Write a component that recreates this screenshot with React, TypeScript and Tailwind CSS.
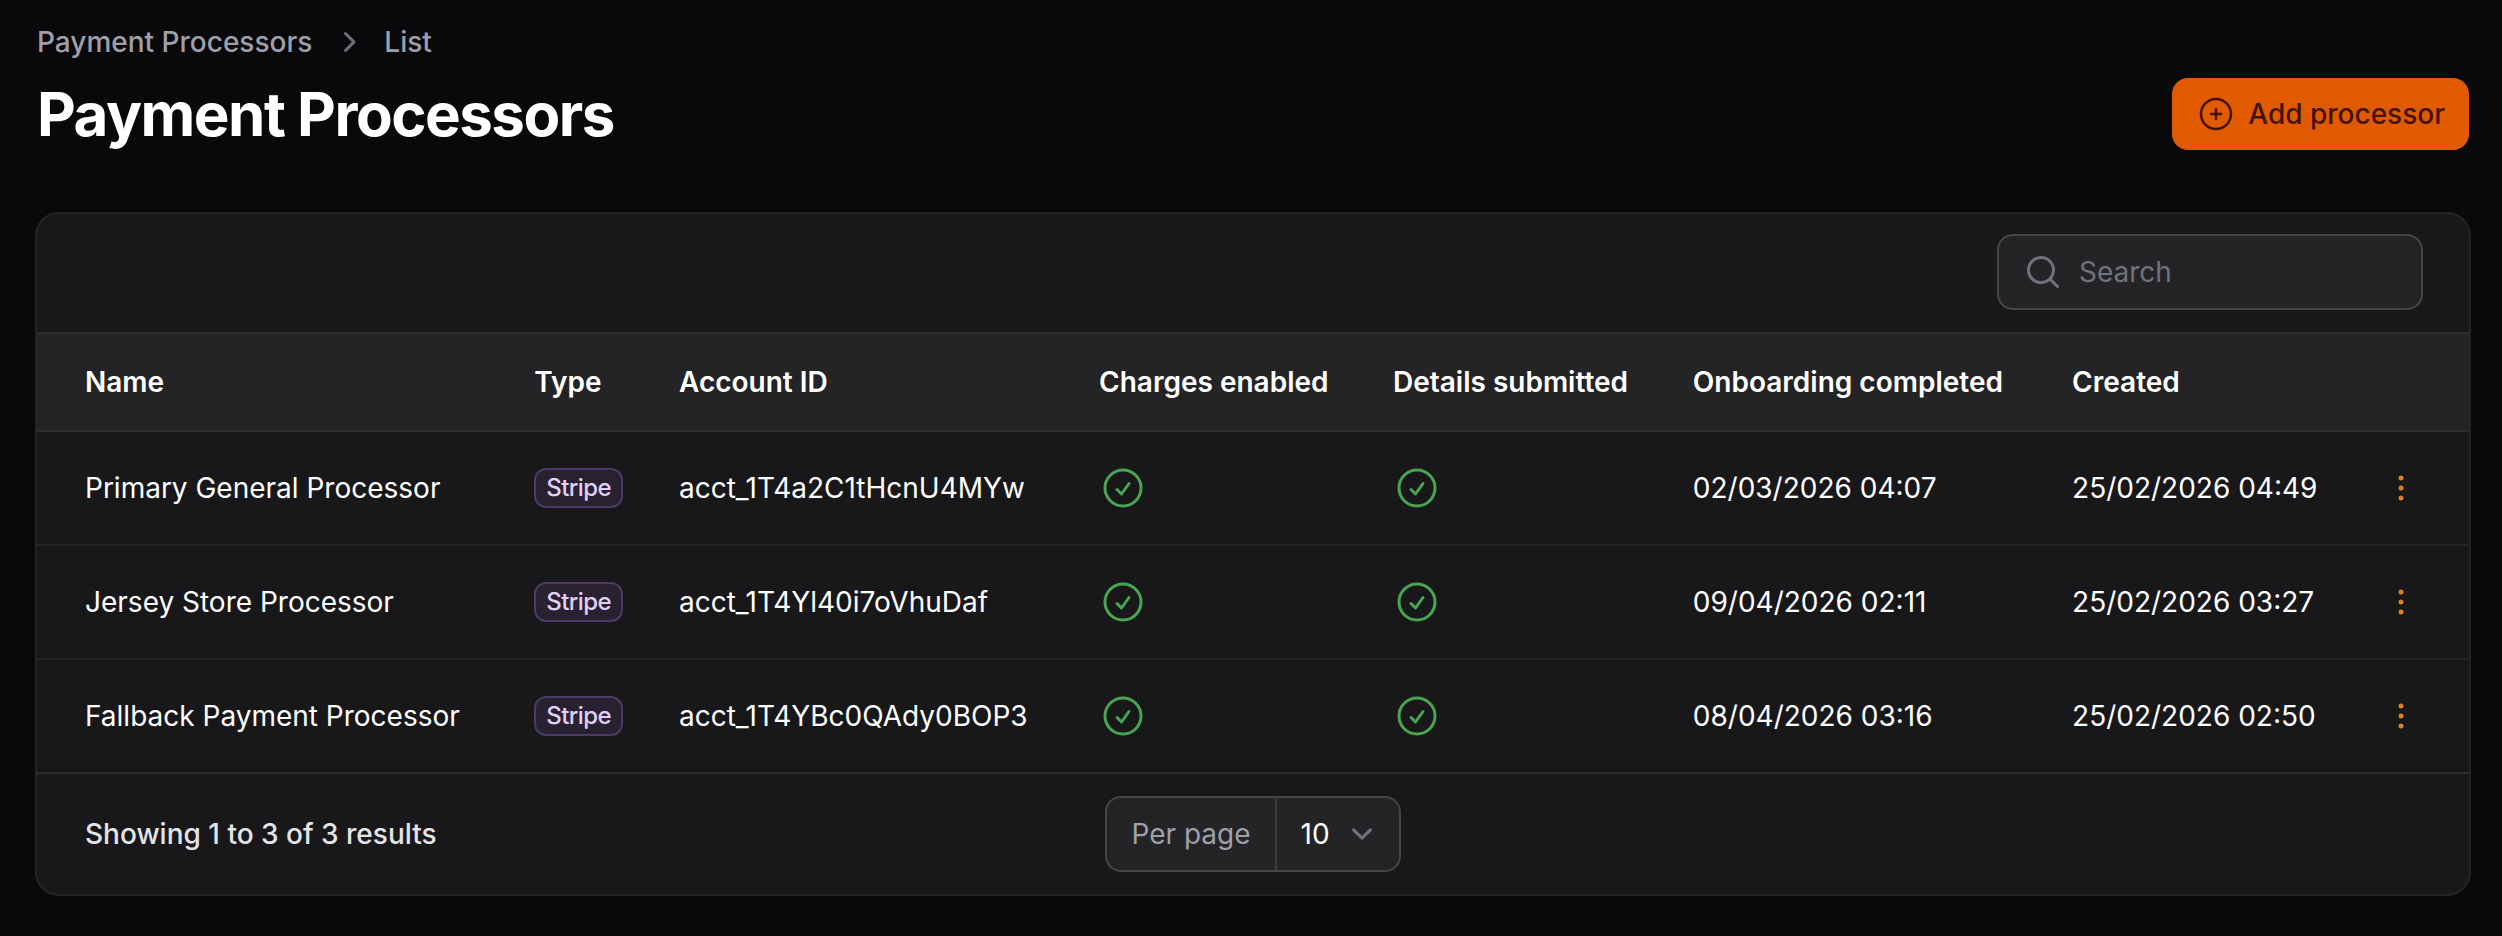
import { useId, useState } from "react";
import type { ReactNode } from "react";

interface Processor {
  name: string;
  type: string;
  accountId: string;
  onboardedAt: string;
  createdAt: string;
}

const processors: Processor[] = [
  {
    name: "Primary General Processor",
    type: "Stripe",
    accountId: "acct_1T4a2C1tHcnU4MYw",
    onboardedAt: "02/03/2026 04:07",
    createdAt: "25/02/2026 04:49",
  },
  {
    name: "Jersey Store Processor",
    type: "Stripe",
    accountId: "acct_1T4Yl40i7oVhuDaf",
    onboardedAt: "09/04/2026 02:11",
    createdAt: "25/02/2026 03:27",
  },
  {
    name: "Fallback Payment Processor",
    type: "Stripe",
    accountId: "acct_1T4YBc0QAdy0BOP3",
    onboardedAt: "08/04/2026 03:16",
    createdAt: "25/02/2026 02:50",
  },
];

interface IconProps {
  className?: string;
  children: ReactNode;
}

function OutlineIcon({ className, children }: IconProps) {
  return (
    <svg
      className={className}
      viewBox="0 0 24 24"
      fill="none"
      stroke="currentColor"
      strokeWidth={1.5}
      strokeLinecap="round"
      strokeLinejoin="round"
      aria-hidden="true"
    >
      {children}
    </svg>
  );
}

function MiniIcon({ className, children }: IconProps) {
  return (
    <svg className={className} viewBox="0 0 20 20" fill="currentColor" aria-hidden="true">
      {children}
    </svg>
  );
}

function CheckIcon() {
  return (
    <span role="img" aria-label="Yes">
      <OutlineIcon className="size-12 text-[#48a552]">
        <path d="M9 12.75 11.25 15 15 9.75M21 12a9 9 0 1 1-18 0 9 9 0 0 1 18 0Z" />
      </OutlineIcon>
    </span>
  );
}

function Breadcrumbs() {
  return (
    <nav aria-label="Breadcrumb">
      <ol className="flex items-center gap-4 font-medium text-zinc-400">
        <li>
          <a href="#">Payment Processors</a>
        </li>
        <li className="flex items-center gap-4">
          <MiniIcon className="size-10 text-zinc-500">
            <path d="M8.22 5.22a.75.75 0 0 1 1.06 0l4.25 4.25a.75.75 0 0 1 0 1.06l-4.25 4.25a.75.75 0 0 1-1.06-1.06L11.94 10 8.22 6.28a.75.75 0 0 1 0-1.06Z" />
          </MiniIcon>
          <a href="#">List</a>
        </li>
      </ol>
    </nav>
  );
}

function SearchField() {
  const id = useId();

  return (
    <div className="flex w-[426px] items-center rounded-2xl border-2 border-[#464648] bg-[#242427]">
      <label htmlFor={id} className="pl-6 pr-4">
        <MiniIcon className="size-10 text-zinc-500">
          <path d="M9 3.5a5.5 5.5 0 1 0 0 11 5.5 5.5 0 0 0 0-11ZM2 9a7 7 0 1 1 12.452 4.391l3.328 3.329a.75.75 0 1 1-1.06 1.06l-3.329-3.328A7 7 0 0 1 2 9Z" />
        </MiniIcon>
      </label>
      <input
        id={id}
        type="text"
        aria-label="Search"
        placeholder="Search"
        className="h-[72px] min-w-0 flex-1 bg-transparent pr-6 text-white outline-none placeholder:text-zinc-500"
      />
    </div>
  );
}

function PerPageSelect() {
  const id = useId();
  const [perPage, setPerPage] = useState("10");

  return (
    <div className="flex items-center rounded-2xl border-2 border-[#464648] bg-[#242427]">
      <label htmlFor={id} className="border-r-2 border-[#3a3a3d] px-6 py-4 text-zinc-400">
        Per page
      </label>
      <div className="relative">
        <select
          id={id}
          value={perPage}
          onChange={(e) => setPerPage(e.target.value)}
          className="h-[72px] w-[122px] appearance-none bg-transparent pl-6 text-white outline-none"
        >
          <option>5</option>
          <option>10</option>
          <option>25</option>
          <option>50</option>
        </select>
        <svg
          className="pointer-events-none absolute inset-y-0 right-4 my-auto size-[42px] text-zinc-500"
          viewBox="0 0 20 20"
          fill="none"
          stroke="currentColor"
          strokeWidth={1.5}
          strokeLinecap="round"
          strokeLinejoin="round"
          aria-hidden="true"
        >
          <path d="m6 8 4 4 4-4" />
        </svg>
      </div>
    </div>
  );
}

function ProcessorRow({ processor }: { processor: Processor }) {
  return (
    <tr className="border-t-2 border-[#242427] first:border-[#2d2d30]">
      <td className="py-8 pl-12 pr-6">{processor.name}</td>
      <td className="px-6 py-8">
        <span className="flex w-fit rounded-xl border-2 border-[#4b3a68] bg-[#272130] px-2.5 text-2xl leading-9 font-medium tracking-tight text-[#e2d0fc]">
          {processor.type}
        </span>
      </td>
      <td className="px-6 py-8">{processor.accountId}</td>
      <td className="px-6 py-8">
        <CheckIcon />
      </td>
      <td className="px-6 py-8">
        <CheckIcon />
      </td>
      <td className="px-6 py-8">{processor.onboardedAt}</td>
      <td className="px-6 py-8">{processor.createdAt}</td>
      <td className="py-8 pl-4 pr-12">
        <button
          type="button"
          aria-label={`Actions for ${processor.name}`}
          className="ml-auto block text-[#e08019]"
        >
          <OutlineIcon className="size-10">
            <path d="M12 6.75a.75.75 0 1 1 0-1.5.75.75 0 0 1 0 1.5ZM12 12.75a.75.75 0 1 1 0-1.5.75.75 0 0 1 0 1.5ZM12 18.75a.75.75 0 1 1 0-1.5.75.75 0 0 1 0 1.5Z" />
          </OutlineIcon>
        </button>
      </td>
    </tr>
  );
}

export default function App() {
  return (
    <main className="min-h-screen bg-[#09090b] pt-[22px] pr-[31px] pb-10 pl-[35px] font-['Inter',sans-serif] text-[28px] leading-10 text-white">
      <header className="flex items-end justify-between px-0.5">
        <div>
          <Breadcrumbs />
          <h1 className="mt-4 text-6xl leading-[72px] font-bold tracking-tight">
            Payment Processors
          </h1>
        </div>
        <button
          type="button"
          className="flex h-[72px] items-center gap-3 rounded-2xl bg-[#e15a00] px-6 font-medium text-[#441306]"
        >
          <OutlineIcon className="size-10">
            <path d="M12 9v6m3-3H9m12 0a9 9 0 1 1-18 0 9 9 0 0 1 18 0Z" />
          </OutlineIcon>
          Add processor
        </button>
      </header>

      <section className="mt-[62px] overflow-hidden rounded-3xl border-2 border-[#242427] bg-[#18181b]">
        <div className="flex justify-end border-b-2 border-[#2d2d30] pt-5 pr-[46px] pb-[22px]">
          <SearchField />
        </div>

        <table className="w-full whitespace-nowrap text-left">
          <thead>
            <tr className="bg-[#242427] [&>th]:px-6 [&>th]:py-7 [&>th]:font-semibold">
              <th className="pl-12!">Name</th>
              <th>Type</th>
              <th>Account ID</th>
              <th>Charges enabled</th>
              <th>Details submitted</th>
              <th>Onboarding completed</th>
              <th>Created</th>
              <th aria-label="Actions" />
            </tr>
          </thead>
          <tbody>
            {processors.map((processor) => (
              <ProcessorRow key={processor.accountId} processor={processor} />
            ))}
          </tbody>
        </table>

        <footer className="grid grid-cols-[1fr_auto_1fr] items-center border-t-2 border-[#2d2d30] px-12 py-[22px]">
          <p className="font-medium text-zinc-200">Showing 1 to 3 of 3 results</p>
          <PerPageSelect />
        </footer>
      </section>
    </main>
  );
}
